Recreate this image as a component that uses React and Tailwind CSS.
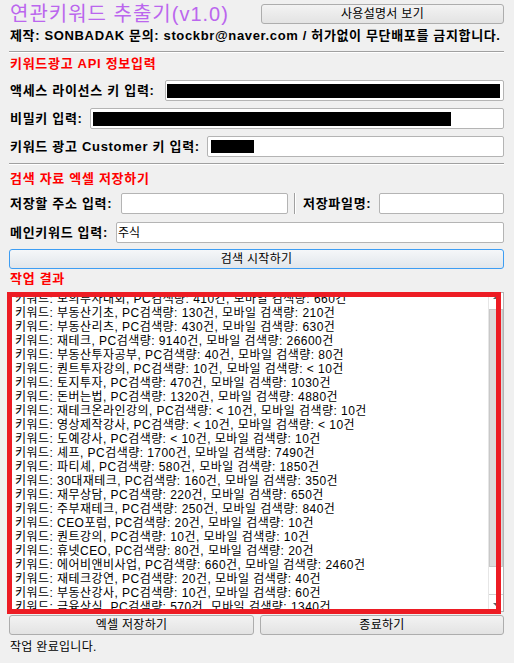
import React from "react";

const lines = [
  ["모의투자대회", "410", "660"],
  ["부동산기초", "130", "210"],
  ["부동산리츠", "430", "630"],
  ["재테크", "9140", "26600"],
  ["부동산투자공부", "40", "80"],
  ["퀀트투자강의", "10", "< 10"],
  ["토지투자", "470", "1030"],
  ["돈버는법", "1320", "4880"],
  ["재테크온라인강의", "< 10", "10"],
  ["영상제작강사", "< 10", "< 10"],
  ["도예강사", "< 10", "10"],
  ["셰프", "1700", "7490"],
  ["파티셰", "580", "1850"],
  ["30대재테크", "160", "350"],
  ["재무상담", "220", "650"],
  ["주부재테크", "250", "840"],
  ["CEO포럼", "20", "10"],
  ["퀀트강의", "10", "10"],
  ["휴넷CEO", "80", "20"],
  ["에어비앤비사업", "660", "2460"],
  ["재테크강연", "20", "40"],
  ["부동산강사", "10", "60"],
  ["금융상식", "570", "1340"],
];

function Btn({ children, className = "" }) {
  return (
    <div
      className={
        "h-[20px] flex items-center justify-center rounded-[3px] border border-[#adadad] bg-gradient-to-b from-[#f3f3f3] to-[#e3e3e3] text-[12px] leading-[18px] tracking-[0.3px] text-black " +
        className
      }
    >
      {children}
    </div>
  );
}

function Input({ className = "", children }) {
  return (
    <div
      className={
        "h-[21px] rounded-[2px] border border-[#b4b4b4] bg-white flex items-center " +
        className
      }
    >
      {children}
    </div>
  );
}

function Sep() {
  return (
    <div className="flex flex-col">
      <div className="h-px bg-[#a0a0a0]" />
      <div className="h-px bg-white" />
    </div>
  );
}

export default function App() {
  return (
    <div className="w-[514px] h-[663px] bg-[#f0f0f0] overflow-hidden pl-[9px] pr-[10px] font-['Liberation_Sans','Noto_Sans_CJK_KR',sans-serif] text-black">
      {/* title row */}
      <div className="mt-[3px] h-[22px] flex items-center">
        <div className="pl-[1px] text-[20px] leading-[22px] tracking-[1px] text-[#bb66ee] whitespace-nowrap">
          연관키워드 추출기(v1.0)
        </div>
        <Btn className="ml-auto w-[243px]">사용설명서 보기</Btn>
      </div>
      <div className="mt-[2px] h-[18px] pl-[1px] text-[13px] leading-[18px] font-bold tracking-[0.65px] whitespace-nowrap">
        제작: SONBADAK 문의: stockbr@naver.com / 허가없이 무단배포를 금지합니다.
      </div>
      <div className="mt-[6px]">
        <Sep />
      </div>
      <div className="mt-[3px] h-[16px] pl-[1px] text-[13px] leading-[16px] font-bold tracking-[0.7px] text-[#ff0000]">
        키워드광고 API 정보입력
      </div>
      {/* row 1 */}
      <div className="mt-[8px] flex items-center">
        <div className="w-[156px] pl-[1px] text-[13px] font-bold tracking-[0.7px] whitespace-nowrap">
          액세스 라이선스 키 입력:
        </div>
        <Input className="flex-1 pl-[1px]">
          <div className="h-[14px] w-[333px] bg-black" />
        </Input>
      </div>
      <div className="mt-[7px] flex items-center">
        <div className="w-[81px] pl-[1px] text-[13px] font-bold tracking-[0.7px] whitespace-nowrap">
          비밀키 입력:
        </div>
        <Input className="flex-1 pl-[2px]">
          <div className="h-[14px] w-[358px] bg-black" />
        </Input>
      </div>
      <div className="mt-[7px] flex items-center">
        <div className="w-[198px] pl-[1px] text-[13px] font-bold tracking-[0.7px] whitespace-nowrap">
          키워드 광고 Customer 키 입력:
        </div>
        <Input className="flex-1 pl-[3px]">
          <div className="h-[13px] w-[43px] bg-black" />
        </Input>
      </div>
      <div className="mt-[6px]">
        <Sep />
      </div>
      <div className="mt-[6px] h-[16px] pl-[1px] text-[13px] leading-[16px] font-bold tracking-[0.7px] text-[#ff0000]">
        검색 자료 엑셀 저장하기
      </div>
      {/* row 4 */}
      <div className="mt-[6px] flex items-center">
        <div className="w-[112px] pl-[1px] text-[13px] font-bold tracking-[0.7px] whitespace-nowrap">
          저장할 주소 입력:
        </div>
        <Input className="w-[167px]" />
        <div className="ml-[6px] h-[21px] flex">
          <div className="w-px bg-[#a0a0a0]" />
          <div className="w-px bg-white" />
        </div>
        <div className="ml-[7px] w-[76px] text-[13px] font-bold tracking-[0.7px] whitespace-nowrap">
          저장파일명:
        </div>
        <Input className="flex-1" />
      </div>
      <div className="mt-[8px] flex items-center">
        <div className="w-[107px] pl-[1px] text-[13px] font-bold tracking-[0.7px] whitespace-nowrap">
          메인키워드 입력:
        </div>
        <Input className="flex-1 pl-[1px] text-[12px]">주식</Input>
      </div>
      <div className="mt-[6px] h-[20px] flex items-center justify-center rounded-[3px] border border-[#3d9df3] bg-gradient-to-b from-[#f5f7f9] to-[#e1e6eb] text-[12px] tracking-[0.3px]">
        검색 시작하기
      </div>
      <div className="mt-[2px] h-[16px] pl-[1px] text-[13px] leading-[16px] font-bold tracking-[0.7px] text-[#ff0000]">
        작업 결과
      </div>
      {/* result area */}
      <div className="relative mt-[5px] h-[320px] border border-[#b4b4b4] bg-white flex">
        <div className="flex-1 overflow-hidden pl-[5px]">
          <div className="mt-[-1px] text-[12px] leading-[14px] tracking-[0.45px] whitespace-nowrap">
            {lines.map(([k, pc, m], i) => (
              <div key={i}>
                키워드: {k}, PC검색량: {pc}건, 모바일 검색량: {m}건
              </div>
            ))}
          </div>
        </div>
        <div className="w-[15px] flex flex-col border-l border-[#e6e6e6] bg-white">
          <div className="h-[16px] flex justify-center pt-[3px]">
            <div className="w-0 h-0 border-l-[3px] border-r-[3px] border-b-[3px] border-l-transparent border-r-transparent border-b-[#606060]" />
          </div>
          <div className="h-[258px] bg-[#dcdcdc] border border-[#c8c8c8]" />
          <div className="flex-1" />
          <div className="h-[17px] flex justify-center pt-[8px] border-t border-[#d0d0d0]">
            <div className="w-0 h-0 border-l-[3px] border-r-[3px] border-t-[3px] border-l-transparent border-r-transparent border-t-[#606060]" />
          </div>
        </div>
        <div className="absolute left-[-3px] top-[-1px] w-[494px] h-[322px] border-[5px] border-[#ed1c24]" />
      </div>
      <div className="mt-[3px] flex gap-[6px]">
        <Btn className="w-[245px]">엑셀 저장하기</Btn>
        <Btn className="flex-1">종료하기</Btn>
      </div>
      <div className="mt-[4px] h-[16px] pl-[1px] text-[12px] leading-[16px] tracking-[0.3px]">
        작업 완료입니다.
      </div>
    </div>
  );
}
